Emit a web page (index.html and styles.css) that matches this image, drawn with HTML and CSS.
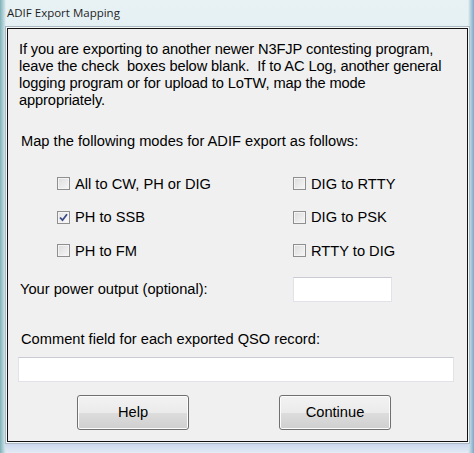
FILE: index.html
```html
<!DOCTYPE html>
<html lang="en">

<head>
    <link rel="stylesheet" href="styles.css">
</head>

<body>
    <div class="window">
        <div class="titlebar">ADIF Export Mapping</div>
        <div class="client">
            <p class="intro">If you are exporting to another newer N3FJP contesting program,<br>leave the check&nbsp; boxes below blank.&nbsp; If to AC Log, another general<br>logging program or for upload to LoTW, map the mode<br>appropriately.</p>

            <div class="map-label">Map the following modes for ADIF export as follows:</div>

            <div class="modes">
                <label class="opt"><span class="box"></span>All to CW, PH or DIG</label>
                <label class="opt"><span class="box"></span>DIG to RTTY</label>
                <label class="opt"><span class="box checked"><svg width="9" height="9" viewBox="0 0 9 9"><path d="M1 4.5 L3.5 7.2 L8 1.2" fill="none" stroke="#3b4a86" stroke-width="1.8"/></svg></span>PH to SSB</label>
                <label class="opt"><span class="box"></span>DIG to PSK</label>
                <label class="opt"><span class="box"></span>PH to FM</label>
                <label class="opt"><span class="box"></span>RTTY to DIG</label>
            </div>

            <div class="power-row">
                <span class="power-label">Your power output (optional):</span>
                <div class="field power"></div>
            </div>

            <div class="comment-label">Comment field for each exported QSO record:</div>
            <div class="field comment"></div>

            <div class="buttons">
                <button class="btn">Help</button>
                <button class="btn">Continue</button>
            </div>
        </div>
    </div>
</body>

</html>
```

FILE: styles.css
```css
html, body {
    margin: 0;
    height: 100%;
}

body {
    font-family: "Liberation Sans", Arial, sans-serif;
    font-size: 14.67px;
    color: #000;
    background: #fff;
}

.window {
    height: 453px;
    box-sizing: border-box;
    padding: 0 6px 11px 7px;
    background:
        linear-gradient(to right, #7fb0b8 0px, #cfe4e8 5px, transparent 6px, transparent 468px, #cfe4e8 469px, #7fa6c8 474px),
        linear-gradient(to bottom, #e8f2f5 0%, #d7e9ee 30%, #c9dfe6 70%, #7d95d6 92%, #e4ecf4 100%);
}

.titlebar {
    height: 28px;
    line-height: 26px;
    font-family: "Open Sans", sans-serif;
    font-size: 11.5px;
    color: #1e1e1e;
}

.client {
    height: 414px;
    box-sizing: border-box;
    background: #f0f0f0;
    border: 1px solid #111;
    box-shadow: 0 0 0 1px #f4f6f7, 0 0 0 2px #a9b8c2;
    padding: 12px 10px 0 11px;
}

.intro {
    margin: 0;
    line-height: 17px;
    letter-spacing: -0.12px;
    white-space: nowrap;
}

.map-label {
    margin-top: 24px;
    padding-left: 2px;
    line-height: 17px;
}

.modes {
    display: grid;
    grid-template-columns: 236px 1fr;
    margin-top: 17px;
    padding-left: 38px;
}

.opt {
    display: flex;
    align-items: center;
    gap: 5px;
    height: 33.5px;
}

.box {
    width: 11px;
    height: 11px;
    border: 1px solid #8f8f8f;
    background: linear-gradient(135deg, #dcdcdc, #f6f6f6);
    box-shadow: inset 0 0 0 1px #f4f4f4;
    display: flex;
    align-items: center;
    justify-content: center;
}

.box.checked {
    background: linear-gradient(135deg, #e4e4e4, #fbfbfb);
}

.power-row {
    display: flex;
    align-items: center;
    margin-top: 9px;
    height: 25px;
}

.power-label {
    padding-left: 1px;
    width: 273px;
}

.field {
    background: #fff;
    border: 1px solid #e2e3ea;
    border-top-color: #c8cbd3;
    box-sizing: border-box;
}

.field.power {
    width: 99px;
    height: 25px;
}

.comment-label {
    margin-top: 29px;
    padding-left: 2px;
    line-height: 17px;
}

.field.comment {
    margin-top: 9px;
    margin-left: -1px;
    width: 436px;
    height: 25px;
}

.buttons {
    display: flex;
    gap: 90px;
    margin-top: 13px;
    padding-left: 58px;
}

.btn {
    width: 112px;
    height: 35px;
    font-family: "Liberation Sans", Arial, sans-serif;
    font-size: 14.67px;
    color: #000;
    border: 1px solid #707070;
    border-radius: 3px;
    background: linear-gradient(to bottom, #f2f2f2 0%, #ebebeb 50%, #dddddd 51%, #cfcfcf 100%);
    box-shadow: inset 0 0 0 1px #fcfcfc;
    padding: 0;
}
```
